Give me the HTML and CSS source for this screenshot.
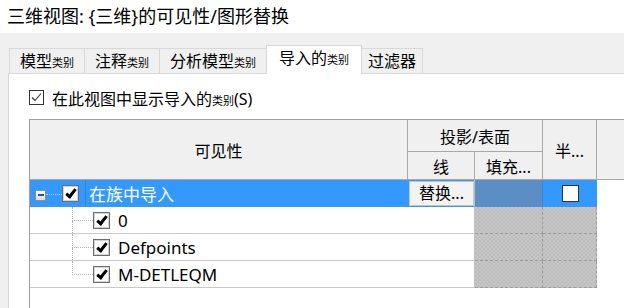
FILE: index.html
```html
<!DOCTYPE html>
<html lang="zh">
<head>
    <meta charset="UTF-8">
    <title>可见性/图形替换</title>
    <link rel="stylesheet" href="styles.css">
</head>
<body>

    <div class="title">三维视图: {三维}的可见性/图形替换</div>

    <div class="dialog">
        <div class="tabs">
            <div class="tab">模型<small>类别</small></div>
            <div class="tab">注释<small>类别</small></div>
            <div class="tab">分析模型<small>类别</small></div>
            <div class="tab active">导入的<small>类别</small></div>
            <div class="tab tab-short">过滤器</div>
        </div>

        <div class="panel">
            <label class="show-row">
                <svg class="box" width="15" height="15" viewBox="0 0 15 15">
                    <rect x="0.5" y="0.5" width="14" height="14" fill="#fff" stroke="#333"/>
                    <polyline points="3,7.5 6,10.5 12,3.5" fill="none" stroke="#333" stroke-width="1.1"/>
                </svg>
                <span>在此视图中显示导入的<small>类别</small>(S)</span>
            </label>

            <div class="grid">
                <!-- en-tête -->
                <div class="head head-vis">可见性</div>
                <div class="head head-proj">投影/表面</div>
                <div class="head head-half">半...</div>
                <div class="head head-rest"></div>
                <div class="head head-line">线</div>
                <div class="head head-fill">填充...</div>

                <!-- ligne sélectionnée -->
                <div class="cell tree selected">
                    <span class="minus"></span>
                    <span class="dots"></span>
                    <span class="cb on"></span>
                    <span class="name">在族中导入</span>
                </div>
                <div class="cell line selected"><span class="btn">替换...</span></div>
                <div class="cell fill-sel"></div>
                <div class="cell selected half"><span class="cb white"></span></div>
                <div class="empty"></div>

                <div class="cell tree child">
                    <span class="elbow"><i></i><i></i></span>
                    <span class="cb on"></span>
                    <span class="label">0</span>
                </div>
                <div class="cell line"></div>
                <div class="cell hatch"></div>
                <div class="cell hatch"></div>
                <div class="empty"></div>

                <div class="cell tree child">
                    <span class="elbow"><i></i><i></i></span>
                    <span class="cb on"></span>
                    <span class="label">Defpoints</span>
                </div>
                <div class="cell line"></div>
                <div class="cell hatch"></div>
                <div class="cell hatch"></div>
                <div class="empty"></div>

                <div class="cell tree child">
                    <span class="elbow last"><i></i><i></i></span>
                    <span class="cb on"></span>
                    <span class="label">M-DETLEQM</span>
                </div>
                <div class="cell line"></div>
                <div class="cell hatch"></div>
                <div class="cell hatch"></div>
                <div class="empty"></div>
            </div>
        </div>
    </div>

</body>
</html>
```

FILE: styles.css
```css
body {
    margin: 0;
    width: 629px;
    height: 308px;
    overflow: hidden;
    background: #fff;
    font-family: "Noto Sans", "Noto Sans CJK SC", sans-serif;
    color: #000;
}
small {
    font-size: 11px;
}
.title {
    height: 33px;
    line-height: 32px;
    padding-left: 7px;
    font-size: 18px;
}
.dialog {
    width: 616px;
    height: 275px;
    padding-left: 8px;
    background: #f0f0f0;
    display: flex;
    flex-direction: column;
}
.tabs {
    flex: none;
    height: 40px;
    display: flex;
    align-items: flex-end;
    padding-left: 1px;
}
.tab {
    height: 25px;
    box-sizing: border-box;
    padding: 0 10px;
    border: 1px solid #d9d9d9;
    border-bottom: none;
    margin-right: -1px;
    font-size: 16px;
    line-height: 24px;
    white-space: nowrap;
}
.tab.active {
    position: relative;
    height: 29px;
    margin-bottom: -1px;
    padding: 0 12px;
    background: #fff;
    line-height: 25px;
}
.tab-short {
    padding: 0 6px;
}
.panel {
    flex: 1;
    min-height: 0;
    overflow: hidden;
    background: #fff;
    border-top: 1px solid #d9d9d9;
    border-left: 1px solid #d9d9d9;
    padding-left: 20px;
}
.show-row {
    display: flex;
    align-items: center;
    gap: 8px;
    margin-top: 16px;
    height: 15px;
    font-size: 16px;
    white-space: nowrap;
}
.box {
    display: block;
    flex: none;
}
.grid {
    margin-top: 14px;
    height: 200px;
    display: grid;
    grid-template-columns: 378px 67px 68px 54px 27px;
    grid-template-rows: 32px 28px 27px 27px 27px 27px 1fr;
    border-top: 1px solid #a0a0a0;
    border-left: 1px solid #a0a0a0;
}
.head {
    background: #f0f0f0;
    border-right: 1px solid #a8a8a8;
    border-bottom: 1px solid #a8a8a8;
    font-size: 16px;
    display: flex;
    align-items: center;
    justify-content: center;
    white-space: nowrap;
}
.head-vis {
    grid-column: 1;
    grid-row: 1 / 3;
}
.head-proj {
    grid-column: 2 / 4;
    grid-row: 1;
}
.head-half {
    grid-column: 4;
    grid-row: 1 / 3;
}
.head-rest {
    grid-column: 5;
    grid-row: 1 / 3;
    border-right: none;
}
.head-line {
    grid-column: 2;
    grid-row: 2;
}
.head-fill {
    grid-column: 3;
    grid-row: 2;
}
.cell {
    box-sizing: border-box;
    border-bottom: 1px solid #c8c8c8;
    display: flex;
    align-items: center;
}
.line {
    border-right: 1px solid #c0c0c0;
}
.selected {
    background: #3399ff;
    border-bottom-color: #3399ff;
}
.tree.selected {
    padding-left: 5px;
}
.minus {
    width: 11px;
    height: 11px;
    box-sizing: border-box;
    margin-top: 4px;
    border: 1px solid #8c8c8c;
    background: linear-gradient(#fff, #dcdcdc);
    display: flex;
    align-items: center;
    justify-content: center;
}
.minus::after {
    content: "";
    width: 6px;
    height: 2px;
    background: #2b4f9e;
}
.dots {
    width: 16px;
    height: 0;
    margin-top: 3px;
    border-top: 1px dotted #b8d8ff;
}
.cb {
    position: relative;
    flex: none;
    width: 17px;
    height: 17px;
    box-sizing: border-box;
    border: 1px solid #6d6d6d;
    box-shadow: inset 0 0 0 1px #d4d4d4;
    background: #fff;
}
.cb.on::after {
    content: "";
    position: absolute;
    left: 5px;
    top: 1px;
    width: 3px;
    height: 8px;
    border: solid #000;
    border-width: 0 3px 3px 0;
    transform: rotate(38deg);
}
.cb.white {
    border-color: #333;
    box-shadow: none;
}
.name {
    align-self: stretch;
    display: flex;
    align-items: center;
    margin-left: 6px;
    padding-left: 3px;
    border-left: 1px solid #2b86e0;
    color: #fff;
    font-size: 17px;
}
.child {
    padding-left: 42px;
}
.elbow {
    align-self: stretch;
    width: 21px;
    display: flex;
    flex-direction: column;
}
.elbow i {
    flex: 1;
    border-left: 1px dotted #b0b0b0;
}
.elbow i:first-child {
    border-bottom: 1px dotted #b0b0b0;
}
.elbow.last i:last-child {
    border-left: none;
}
.label {
    margin-left: 8px;
    font-size: 17px;
}
.btn {
    width: 65px;
    height: 25px;
    box-sizing: border-box;
    margin-left: 1px;
    background: #f3f3f3;
    border: 1px solid #c4c4c4;
    font-size: 16px;
    line-height: 22px;
    text-align: center;
}
.fill-sel {
    background: #5a8ec4;
    border-right: 1px solid #4f80b5;
    border-bottom: 1px solid #3399ff;
}
.half {
    justify-content: center;
}
.hatch {
    background: repeating-conic-gradient(#bdbdbd 0 25%, #c6c6c6 0 50%) 0 0 / 4px 4px;
    border-right: 1px dashed #9c9c9c;
    border-bottom: 1px dashed #9c9c9c;
}
.empty {
    background: #fff;
}
```
